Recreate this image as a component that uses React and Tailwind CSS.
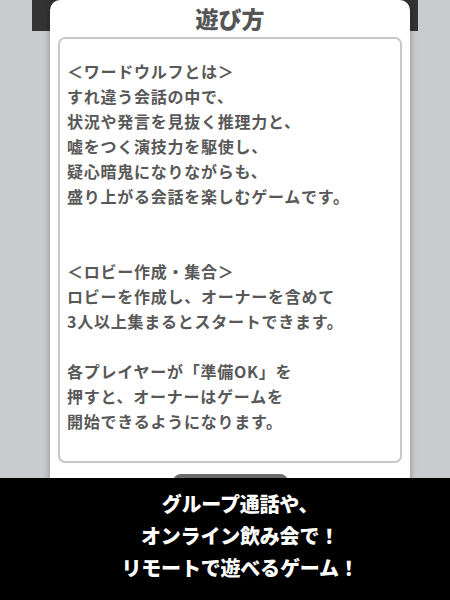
import React from 'react';

const rules = [
  '＜ワードウルフとは＞',
  'すれ違う会話の中で、',
  '状況や発言を見抜く推理力と、',
  '嘘をつく演技力を駆使し、',
  '疑心暗鬼になりながらも、',
  '盛り上がる会話を楽しむゲームです。',
  '',
  '',
  '＜ロビー作成・集合＞',
  'ロビーを作成し、オーナーを含めて',
  '3人以上集まるとスタートできます。',
  '',
  '各プレイヤーが「準備OK」を',
  '押すと、オーナーはゲームを',
  '開始できるようになります。',
];

const taglines = ['グループ通話や、', 'オンライン飲み会で！', 'リモートで遊べるゲーム！'];

const font = { fontFamily: '"Noto Sans CJK JP", "Noto Sans", sans-serif' };

export default function App() {
  return (
    <div className="relative w-[450px] h-[600px] overflow-hidden bg-[#c9cbce]" style={font}>
      {/* app header behind the modal */}
      <div className="mx-[32px] h-[31px] bg-[#333333]" />

      {/* how-to-play modal */}
      <div className="absolute left-[50px] top-0 w-[360px] h-[520px] bg-white rounded-t-[10px] shadow-[0_0_7px_rgba(0,0,0,0.35)] flex flex-col">
        <h2 className="h-[37px] flex items-center justify-center text-[23px] font-extrabold text-[#555555] leading-none">
          遊び方
        </h2>
        <div className="mx-[8px] h-[426px] border-2 border-[#c8c8c8] rounded-[7px] pl-[7px] pt-[20px]">
          {rules.map((line, i) => (
            <p key={i} className="h-[25px] leading-[25px] text-[16px] font-bold text-[#585858] tracking-[0.75px] whitespace-nowrap">
              {line}
            </p>
          ))}
        </div>
        <div className="mx-auto mt-[11px] w-[115px] h-[30px] rounded-[8px] bg-[#6b6b6b]" />
      </div>

      {/* promo band */}
      <div className="absolute left-0 right-0 bottom-0 h-[122px] bg-black flex flex-col items-center pt-[10px] pl-[30px]">
        {taglines.map((line) => (
          <p key={line} className="h-[32px] leading-[32px] text-[20px] font-black text-white tracking-[-0.2px]">
            {line}
          </p>
        ))}
      </div>
    </div>
  );
}
